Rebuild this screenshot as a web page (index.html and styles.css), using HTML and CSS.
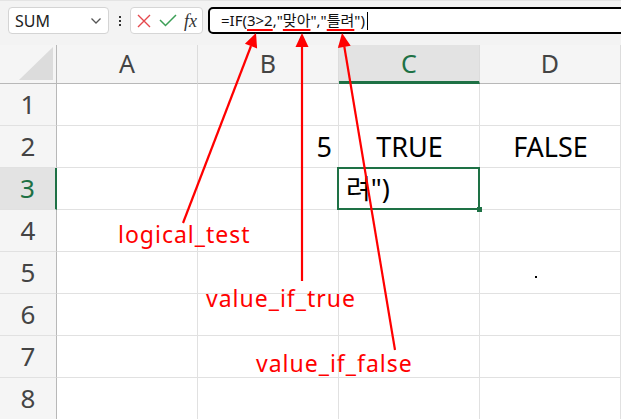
FILE: index.html
```html
<!DOCTYPE html>
<html lang="ko">
<head>
<meta charset="utf-8">
<title>IF</title>
<link rel="stylesheet" href="styles.css">
</head>
<body>
<div class="topbar">
  <div class="namebox">
    <span class="name">SUM</span>
    <svg class="chev" width="12" height="8" viewBox="0 0 12 8"><path d="M1.5 1.5 L6 6 L10.5 1.5" fill="none" stroke="#555" stroke-width="1.3"/></svg>
  </div>
  <div class="dots"><i></i><i></i><i></i></div>
  <div class="btns">
    <svg width="14" height="14" viewBox="0 0 14 14"><path d="M1 1 L13 13 M13 1 L1 13" stroke="#e5484d" stroke-width="1.4" fill="none"/></svg>
    <svg width="18" height="13" viewBox="0 0 18 13"><path d="M1 6 L6.5 11.5 L17 1" stroke="#3c9f56" stroke-width="1.5" fill="none"/></svg>
    <span class="fx">fx</span>
  </div>
  <div class="formula">=IF(<span class="u">3&gt;2</span>,"<span class="u">맞아</span>","<span class="u">틀려</span>")<span class="caret"></span></div>
</div>
<div class="sheet">
  <div class="hd corner"><svg width="34" height="33" viewBox="0 0 34 33"><path d="M0 33 L34 33 L34 0 Z" fill="#dcdcdc"/></svg></div>
  <div class="hd">A</div><div class="hd">B</div><div class="hd sel">C</div><div class="hd">D</div>

  <div class="rh">1</div><div class="c"></div><div class="c"></div><div class="c"></div><div class="c"></div>
  <div class="rh">2</div><div class="c"></div><div class="c r">5</div><div class="c m">TRUE</div><div class="c m">FALSE</div>
  <div class="rh rsel">3</div><div class="c"></div><div class="c"></div><div class="c active">려")</div><div class="c"></div>
  <div class="rh">4</div><div class="c"></div><div class="c"></div><div class="c"></div><div class="c"></div>
  <div class="rh">5</div><div class="c"></div><div class="c"></div><div class="c"></div><div class="c"><span class="speck"></span></div>
  <div class="rh">6</div><div class="c"></div><div class="c"></div><div class="c"></div><div class="c"></div>
  <div class="rh">7</div><div class="c"></div><div class="c"></div><div class="c"></div><div class="c"></div>
  <div class="rh">8</div><div class="c"></div><div class="c"></div><div class="c"></div><div class="c"></div>
</div>
<svg class="overlay" width="621" height="419" viewBox="0 0 621 419">
  <g stroke="#ff0000" stroke-width="2.2" fill="none">
    <line x1="183" y1="223" x2="251" y2="46"/>
    <line x1="302" y1="281" x2="302" y2="46"/>
    <line x1="395" y1="350" x2="344.3" y2="46.5"/>
  </g>
  <g fill="#ff0000">
    <polygon points="256,33 257.1,48.4 244.9,43.7"/>
    <polygon points="302,33 308.5,47 295.5,47"/>
    <polygon points="342,33 350.7,45.7 337.9,47.9"/>
  </g>
  <g class="lbl" fill="#ff0000">
    <text x="118" y="243">logical_test</text>
    <text x="206" y="307">value_if_true</text>
    <text x="256" y="372">value_if_false</text>
  </g>
</svg>
</body>
</html>
```
FILE: styles.css
```css
* { box-sizing: border-box; }
body {
  margin: 0;
  width: 621px;
  height: 419px;
  overflow: hidden;
  position: relative;
  background: #fff;
  font-family: "Noto Sans", "Noto Sans CJK KR", sans-serif;
}
.topbar {
  height: 45px;
  background: #f3f3f3;
  border-top: 1px solid #e4e4e4;
  display: flex;
  align-items: flex-start;
  padding: 6px 0 0 8px;
}
.namebox {
  width: 101px;
  height: 27px;
  background: #fff;
  border: 1px solid #d4d4d4;
  border-radius: 4px;
  display: flex;
  align-items: center;
  justify-content: space-between;
  padding: 0 6px 0 6px;
}
.name { font-size: 16px; color: #222; line-height: 1; }
.dots {
  width: 21px;
  height: 27px;
  display: flex;
  flex-direction: column;
  align-items: center;
  justify-content: center;
  gap: 2px;
}
.dots i { width: 2px; height: 2px; background: #333; display: block; }
.btns {
  width: 73px;
  height: 27px;
  background: #fff;
  border: 1px solid #d6d6d6;
  border-radius: 4px;
  display: flex;
  align-items: center;
  padding: 0 0 0 6px;
  gap: 8px;
}
.fx {
  font-family: "Liberation Serif", serif;
  font-style: italic;
  font-size: 18px;
  color: #333;
  line-height: 1;
  margin-left: -1px;
}
.formula {
  flex: 1;
  margin-left: 5px;
  margin-right: -10px;
  height: 27px;
  border: 2px solid #000;
  border-radius: 5px;
  background: #fff;
  padding-left: 11px;
  font-size: 15px;
  line-height: 23px;
  color: #111;
  white-space: nowrap;
  display: flex;
  align-items: center;
}
.u {
  text-decoration: underline;
  text-decoration-color: #ff0000;
  text-decoration-thickness: 2px;
  text-underline-offset: 3px;
}
.caret { display: inline-block; width: 1px; height: 18px; background: #000; margin-left: 2px; }

.sheet {
  display: grid;
  grid-template-columns: 57px repeat(4, 141px);
  grid-template-rows: 39px repeat(8, 42px);
}
.hd {
  background: #f5f5f5;
  border-bottom: 1px solid #b8b8b8;
  border-right: 1px solid #dcdcdc;
  text-align: center;
  color: #444;
  font-size: 25px;
  line-height: 37px;
}
.corner { display: flex; align-items: flex-end; justify-content: flex-end; padding: 0 3px 3px 0; border-right-color: #b8b8b8; }
.corner svg { display: block; }
.hd.sel { background: #e3e3e3; color: #1e7145; border-bottom: 3px solid #1e7145; }
.rh {
  background: #f5f5f5;
  border-right: 1px solid #b8b8b8;
  border-bottom: 1px solid #e1e1e1;
  text-align: center;
  color: #444;
  font-size: 26px;
  line-height: 41px;
}
.rh.rsel { background: #e3e3e3; color: #1e7145; border-right: 2px solid #1e7145; }
.c {
  border-right: 1px solid #e1e1e1;
  border-bottom: 1px solid #e1e1e1;
  font-size: 27px;
  line-height: 41px;
  padding: 0 6px 0 7px;
  white-space: nowrap;
  color: #000;
  position: relative;
}
.c.r { text-align: right; }
.c.m { text-align: center; }
.active::after {
  content: "";
  position: absolute;
  left: -2px; top: -1px; right: -1px; bottom: -1px;
  border: 2px solid #1e7145;
}
.active::before {
  content: "";
  position: absolute;
  right: -3px; bottom: -3px;
  width: 5px; height: 5px;
  background: #1e7145;
  z-index: 2;
}
.speck { position: absolute; left: 55px; top: 24px; width: 2px; height: 2px; background: #000; }
.overlay { position: absolute; left: 0; top: 0; pointer-events: none; }
.lbl { font-family: "Noto Sans", sans-serif; font-size: 23px; letter-spacing: 1px; }
```
